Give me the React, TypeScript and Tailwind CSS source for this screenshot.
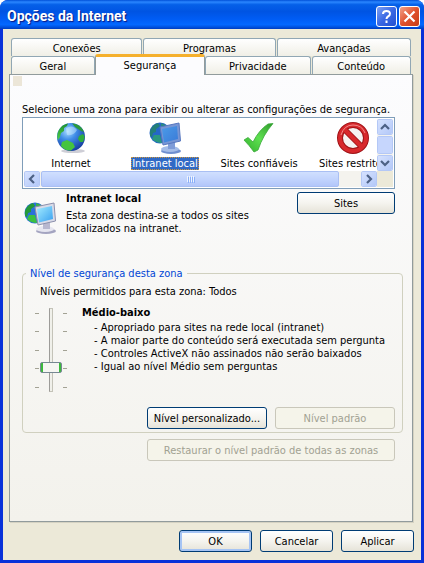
import React, { useState } from 'react';

interface Zone {
  id: string;
  label: string;
  icon: React.ReactNode;
}

const GlobeIcon = () => (
  <svg width="32" height="32" viewBox="0 0 32 32">
    <defs>
      <radialGradient id="sea" cx="0.38" cy="0.3" r="0.75">
        <stop offset="0" stopColor="#a8dcff" />
        <stop offset="0.4" stopColor="#3f8de8" />
        <stop offset="1" stopColor="#143a9c" />
      </radialGradient>
      <linearGradient id="land" x1="0" y1="0" x2="0" y2="1">
        <stop offset="0" stopColor="#1f8f32" />
        <stop offset="1" stopColor="#4fd048" />
      </linearGradient>
    </defs>
    <ellipse cx="18" cy="29" rx="12" ry="2" fill="#b9b9c4" opacity="0.7" />
    <circle cx="16" cy="15" r="14" fill="url(#sea)" />
    <path d="M2.500 12 C4 6 8 2.500 13 1.600 L12 4 L9 6 L9 9 L6 11 L5 15 L3 18 Q1.800 15 2.500 12 Z" fill="url(#land)" />
    <path d="M17 1.200 C23 2 27 5 29 10 L26 9 L23 7 L20 5 Z" fill="#2b9a3c" />
    <path d="M7 20 L12 18 L18 21 L20 25 L16 28.500 Q10 29 6 24 Z" fill="#45c43e" />
    <path d="M24 14 L28 12 L29.800 15 L28 20 L25 20 L23 17 Z" fill="#2fae3e" />
    <path d="M11 6 Q18 2 22 8 Q19 14 12 13 Z" fill="#d8f2ff" opacity="0.45" />
  </svg>
);

const IntranetIcon = ({ selected = false }: { selected?: boolean }) => (
  <svg width="34" height="34" viewBox="0 0 34 34">
    <defs>
      <linearGradient id={selected ? 'screenSel' : 'screen'} x1="0" y1="0" x2="1" y2="1">
        <stop offset="0" stopColor={selected ? '#4b9be8' : '#a4ecff'} />
        <stop offset="1" stopColor={selected ? '#3a7bd8' : '#38a0f0'} />
      </linearGradient>
    </defs>
    <circle cx="12" cy="12" r="10.500" fill={selected ? '#2467c8' : '#2a70dc'} />
    <path d="M2 10 Q4 4 10 2 L12 5 L8 8 L8 11 L5 12 L4 16 L2 15 Z" fill={selected ? '#237f78' : '#259a38'} />
    <path d="M13 2 L18 4 L17 8 L13 9 Z" fill={selected ? '#2a8a80' : '#3cb04a'} />
    <path d="M6 14 L12 14 L14 22 Q8 22 4 18 Z" fill={selected ? '#2a9880' : '#3cc040'} />
    <ellipse cx="23" cy="30" rx="10" ry="3" fill={selected ? '#6f8fd0' : '#a4a4c0'} />
    <ellipse cx="22" cy="28" rx="9" ry="3" fill={selected ? '#a4bce8' : '#e6e6f0'} />
    <path d="M20 22 L27 20 L27 28 L20 28 Z" fill={selected ? '#7f9cd8' : '#b8b8d0'} />
    <path d="M12 6 L31 2 L32.500 20 L15 24 Z" fill={selected ? '#7896d4' : '#d9dbe8'} stroke={selected ? '#5878c0' : '#8d90ac'} strokeWidth="1" />
    <path d="M14 8 L29 5 L30 18 L16 21.500 Z" fill={selected ? 'url(#screenSel)' : 'url(#screen)'} />
  </svg>
);

const CheckIcon = () => (
  <svg width="32" height="32" viewBox="0 0 32 32">
    <defs>
      <linearGradient id="tick" x1="1" y1="0" x2="0" y2="1">
        <stop offset="0" stopColor="#2f9a2c" />
        <stop offset="0.5" stopColor="#5ee050" />
        <stop offset="1" stopColor="#2fae2c" />
      </linearGradient>
    </defs>
    <path d="M1 18 L5 15.500 L10 20 Q16 8 25 2 L30 1.500 Q20 13 15 28 L11 30 Q6 23 1 18 Z" fill="url(#tick)" stroke="#3aa83a" strokeWidth="0.800" strokeLinejoin="round" />
  </svg>
);

const ForbiddenIcon = () => (
  <svg width="34" height="34" viewBox="0 0 34 34">
    <circle cx="17" cy="17" r="13" fill="#f6f2f2" stroke="#a01418" strokeWidth="6" />
    <path d="M8 8 L26 26" stroke="#a01418" strokeWidth="6" />
    <circle cx="17" cy="17" r="13" fill="none" stroke="#d8282c" strokeWidth="4" />
    <path d="M8 8 L26 26" stroke="#d8282c" strokeWidth="4" />
    <path d="M5 14 Q8 4 17 4 Q26 4 29 12" fill="none" stroke="#f08a8a" strokeWidth="1" />
  </svg>
);

const zones: Zone[] = [
  { id: 'internet', label: 'Internet', icon: <GlobeIcon /> },
  { id: 'intranet', label: 'Intranet local', icon: <IntranetIcon selected /> },
  { id: 'trusted', label: 'Sites confiáveis', icon: <CheckIcon /> },
  { id: 'restricted', label: 'Sites restritos', icon: <ForbiddenIcon /> },
];

const levelNotes = [
  'Apropriado para sites na rede local (intranet)',
  'A maior parte do conteúdo será executada sem pergunta',
  'Controles ActiveX não assinados não serão baixados',
  'Igual ao nível Médio sem perguntas',
];

const Tab = ({ label, grow }: { label: string; grow: string }) => (
  <button
    type="button"
    role="tab"
    aria-selected={false}
    className={`${grow} basis-0 h-[18px] rounded-t-[3px] border border-b-0 border-[#91a7b4] bg-linear-to-b from-white to-[#f0efe6] pt-px text-center`}
  >
    {label}
  </button>
);

const XpButton = ({ children, className = '', disabled = false }: { children: React.ReactNode; className?: string; disabled?: boolean }) => (
  <button
    type="button"
    disabled={disabled}
    className={`h-[22px] rounded-[3px] border whitespace-nowrap ${
      disabled
        ? 'border-[#c9c7ba] bg-[#f5f4ea] text-[#a1a192]'
        : 'border-[#003c74] bg-linear-to-b from-white via-[#f5f4ef] to-[#e6e3d8]'
    } ${className}`}
  >
    {children}
  </button>
);

const ScrollButton = ({ label, d }: { label: string; d: string }) => (
  <button
    type="button"
    aria-label={label}
    className="flex size-4 shrink-0 items-center justify-center rounded-[2px] border border-white bg-linear-to-br from-[#d6e2fe] to-[#b3c8f8] outline outline-[#b4c8f6] -outline-offset-1"
  >
    <svg width="10" height="10" viewBox="0 0 10 10" fill="none" stroke="#4d6185" strokeWidth="2.200">
      <path d={d} />
    </svg>
  </button>
);

const Ticks = () => (
  <div className="flex h-[75px] flex-col justify-between">
    {[0, 1, 2, 3, 4].map(n => (
      <span key={n} className="h-px w-1 bg-[#a3a294]" />
    ))}
  </div>
);

export default function App() {
  const [level, setLevel] = useState(1);

  return (
    <div className="bg-white">
      <div className="flex min-h-screen w-full flex-col overflow-hidden rounded-t-[8px] bg-[#0831d9] font-['DejaVu_Sans_Condensed','DejaVu_Sans',sans-serif] text-[11px] leading-[13px] text-black">
        {/* Title bar */}
        <header className="flex h-[29px] shrink-0 items-center justify-between bg-[linear-gradient(to_bottom,#0050d8_0%,#2a86ff_7%,#0560e8_16%,#0054e3_40%,#005cf4_65%,#0468ff_85%,#0050dc_94%,#003cc0_100%)] pr-1 pl-[7px]">
          <h1 className="pt-1 font-[Roboto,sans-serif] text-[14px] font-bold text-white [text-shadow:1px_1px_1px_#0a1883]">Opções da Internet</h1>
          <div className="flex gap-[2px] pt-[3px]">
            <button type="button" aria-label="Ajuda" className="flex size-[21px] items-center justify-center rounded-[3px] border border-white bg-linear-to-br from-[#7d9ff2] via-[#3a68e4] to-[#2450d0]">
              <svg width="15" height="15" viewBox="0 0 15 15" fill="none" stroke="#fff" strokeWidth="2">
                <path d="M4 5 Q4 2 7.500 2 Q11 2 11 4.800 Q11 6.500 9 7.500 Q7.500 8.300 7.500 10" />
                <path d="M7.500 11.500 V14" />
              </svg>
            </button>
            <button type="button" aria-label="Fechar" className="flex size-[21px] items-center justify-center rounded-[3px] border border-white bg-linear-to-br from-[#f0a088] via-[#e0512c] to-[#c83c14]">
              <svg width="15" height="15" viewBox="0 0 15 15" fill="none" stroke="#fff" strokeWidth="2.200">
                <path d="M2.500 2.500 L12.500 12.500 M12.500 2.500 L2.500 12.500" />
              </svg>
            </button>
          </div>
        </header>

        {/* Window body */}
        <main className="mx-[3px] mb-[3px] flex flex-1 flex-col bg-[#ece9d8] pt-[9px] pr-2 pb-2 pl-[6px]">
          <div role="tablist" className="flex flex-col px-[2px]">
            <div className="flex gap-px">
              <Tab label="Conexões" grow="grow-[131]" />
              <Tab label="Programas" grow="grow-[132]" />
              <Tab label="Avançadas" grow="grow-[134]" />
            </div>
            <div className="flex items-end">
              <Tab label="Geral" grow="grow-[83]" />
              <button
                type="button"
                role="tab"
                aria-selected
                className="z-10 -mt-1 -mb-px h-[21px] grow-[110] basis-0 rounded-t-[3px] border-x border-t-3 border-x-[#919b9c] border-t-[#f5b02c] bg-[#fcfcfe] pb-px"
              >
                Segurança
              </button>
              <Tab label="Privacidade" grow="grow-[105]" />
              <span className="w-px" />
              <Tab label="Conteúdo" grow="grow-[99]" />
            </div>
          </div>

          <section role="tabpanel" className="flex flex-1 flex-col border border-[#919b9c] bg-linear-to-b from-[#fcfcfe] to-[#f3f2ec] pr-[9px] pb-[56px] pl-3 shadow-[1px_1px_0_#d5d2c2]">
            <span className="mt-px -ml-[9px] h-[10px] w-[9px] bg-[#ece6d8]" />
            <p className="mt-[17px] whitespace-nowrap">Selecione uma zona para exibir ou alterar as configurações de segurança.</p>

            {/* Zone list */}
            <div className="mt-px mr-2 flex flex-col border border-[#7f9db9] bg-white p-px">
              <div className="flex h-[52px]">
                <div role="listbox" aria-label="Zonas" className="flex min-w-0 flex-1 overflow-hidden">
                  {zones.map(zone => (
                    <div key={zone.id} role="option" aria-selected={zone.id === 'intranet'} className="flex w-[94px] shrink-0 flex-col items-center">
                      <div className="flex h-[38px] shrink-0 items-center">{zone.icon}</div>
                      <span className={zone.id === 'intranet' ? 'bg-[#316ac5] px-px text-white outline outline-dotted outline-[#ce953a] -outline-offset-1' : 'px-px'}>
                        {zone.label}
                      </span>
                    </div>
                  ))}
                </div>
                <div className="flex flex-col items-center gap-px bg-[#f4f3ee]">
                  <ScrollButton label="Rolar para cima" d="M1 7 L5 3 L9 7" />
                  <span className="w-4 flex-1 rounded-[2px] border border-white bg-[#c6d6fd] outline outline-[#b4c8f6] -outline-offset-1" />
                  <ScrollButton label="Rolar para baixo" d="M1 3 L5 7 L9 3" />
                </div>
              </div>
              <div className="flex h-4 bg-[#f4f3ee]">
                <ScrollButton label="Rolar para a esquerda" d="M7 1 L3 5 L7 9" />
                <span className="ml-px flex flex-1 items-center justify-center gap-px rounded-[2px] border border-[#a9bff3] bg-linear-to-b from-[#d0dffe] via-[#c2d4fd] to-[#b2c6fa]">
                  {[0, 1, 2, 3].map(n => (
                    <span key={n} className="h-[6px] w-px bg-[#eef4fe] shadow-[1px_1px_0_#8cb0f8]" />
                  ))}
                </span>
                <span className="w-[22px]" />
                <ScrollButton label="Rolar para a direita" d="M3 1 L7 5 L3 9" />
                <span className="w-4 bg-[#ece9d8]" />
              </div>
            </div>

            {/* Selected zone */}
            <div className="mr-2 flex items-start pt-[3px]">
              <div className="w-[44px] shrink-0 pt-[9px] pl-px">
                <IntranetIcon />
              </div>
              <div className="flex-1">
                <h2 className="font-bold">Intranet local</h2>
                <p className="mt-1 max-w-[200px]">Esta zona destina-se a todos os sites localizados na intranet.</p>
              </div>
              <XpButton className="w-[98px]">Sites</XpButton>
            </div>

            {/* Security level */}
            <fieldset className="mt-8 rounded-[4px] border border-[#d0d0bf] px-[7px] pb-[3px]">
              <legend className="-ml-1 px-1 text-[#0046d5]">Nível de segurança desta zona</legend>
              <p className="mt-[5px] ml-[10px]">Níveis permitidos para esta zona: Todos</p>
              <div className="mt-2 flex">
                <div className="ml-[5px] flex w-[47px] shrink-0 items-center self-start pt-[2px]">
                  <Ticks />
                  <input
                    type="range"
                    min={0}
                    max={4}
                    step={1}
                    value={level}
                    onChange={e => setLevel(Number(e.target.value))}
                    aria-label="Nível de segurança"
                    className="mr-px ml-px h-[84px] w-[22px] appearance-none bg-transparent [direction:rtl] [writing-mode:vertical-lr] [&::-webkit-slider-runnable-track]:w-1 [&::-webkit-slider-runnable-track]:border [&::-webkit-slider-runnable-track]:border-[#c4c3b8] [&::-webkit-slider-runnable-track]:border-l-[#9d9c99] [&::-webkit-slider-runnable-track]:bg-[#f0f0ea] [&::-webkit-slider-thumb]:-ml-[10px] [&::-webkit-slider-thumb]:h-[11px] [&::-webkit-slider-thumb]:w-[22px] [&::-webkit-slider-thumb]:appearance-none [&::-webkit-slider-thumb]:rounded-[2px] [&::-webkit-slider-thumb]:border [&::-webkit-slider-thumb]:border-[#778892] [&::-webkit-slider-thumb]:bg-[linear-gradient(to_right,#3cb83c_2px,#f6f6f2_2px,#f6f6f2_18px,#3cb83c_18px)]"
                  />
                  <Ticks />
                </div>
                <div>
                  <h3 className="font-bold">Médio-baixo</h3>
                  <ul className="mt-[2px] pl-3">
                    {levelNotes.map(note => (
                      <li key={note} className="whitespace-nowrap">- {note}</li>
                    ))}
                  </ul>
                </div>
              </div>
              <div className="mt-[15px] flex justify-end gap-2">
                <XpButton className="w-[120px]">Nível personalizado...</XpButton>
                <XpButton disabled className="w-[120px]">Nível padrão</XpButton>
              </div>
            </fieldset>
            <div className="mt-[6px] mr-2 flex justify-end">
              <XpButton disabled className="w-[248px]">Restaurar o nível padrão de todas as zonas</XpButton>
            </div>
          </section>

          <footer className="-mr-px flex justify-end gap-2 pt-2">
            <XpButton className="w-[73px] shadow-[inset_0_0_0_2px_#a6c4f4]">OK</XpButton>
            <XpButton className="w-[73px]">Cancelar</XpButton>
            <XpButton className="w-[73px]">Aplicar</XpButton>
          </footer>
        </main>
      </div>
    </div>
  );
}
